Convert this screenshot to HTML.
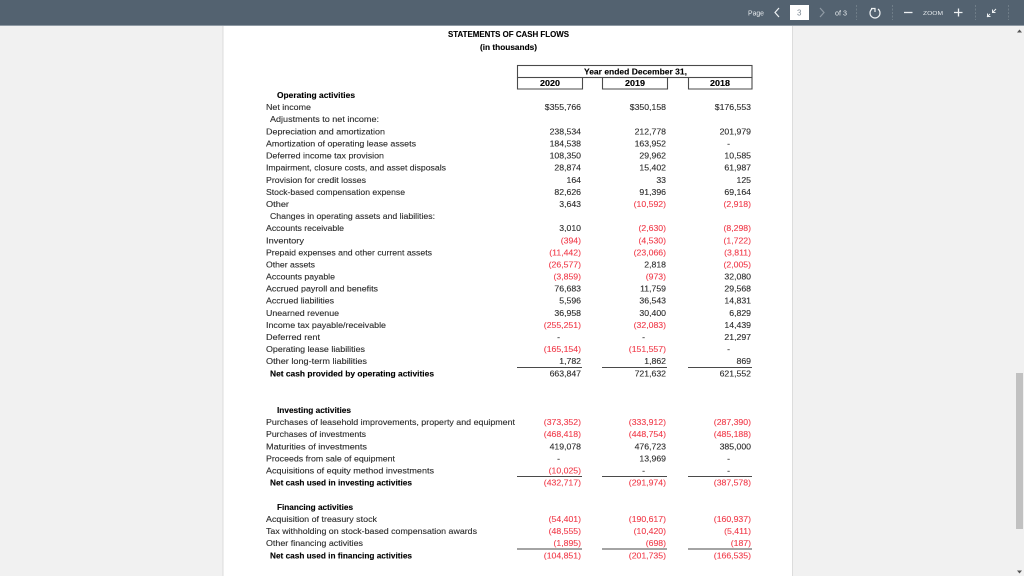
<!DOCTYPE html>
<html>
<head>
<meta charset="utf-8">
<style>
html,body{margin:0;padding:0;width:1024px;height:576px;overflow:hidden;background:#f1f1f1}
svg{position:absolute;left:0;top:0;display:block}
.doc text{font-family:"Liberation Sans",sans-serif;font-size:8.7px;fill:#2c2c2c;stroke:#2c2c2c;stroke-width:.12px}
.doc .b{font-weight:bold;fill:#000;stroke:#000;font-size:8.7px}
.n text{text-anchor:end}
.n .r{fill:#f03c4b;stroke:#f03c4b}
.tb text{font-family:"Liberation Sans",sans-serif;fill:#e6eaed}
</style>
</head>
<body>
<svg width="1024" height="576" viewBox="0 0 1024 576">
<rect width="1024" height="576" fill="#f1f1f1"/>
<rect x="223" y="25" width="570" height="551" fill="#fff"/>
<rect x="222.5" y="25" width="1" height="551" fill="#dcdcdc"/>
<rect x="792" y="25" width="1" height="551" fill="#dcdcdc"/>

<g class="doc" style="filter:blur(.35px)">
<text class="b" x="448" y="37" textLength="121" lengthAdjust="spacingAndGlyphs">STATEMENTS OF CASH FLOWS</text>
<text class="b" x="480" y="50" textLength="57" lengthAdjust="spacingAndGlyphs">(in thousands)</text>

<text class="b" x="584" y="74.500" textLength="103" lengthAdjust="spacingAndGlyphs">Year ended December 31,</text>
<text class="b" x="540" y="86" textLength="20" lengthAdjust="spacingAndGlyphs">2020</text>
<text class="b" x="625" y="86" textLength="20" lengthAdjust="spacingAndGlyphs">2019</text>
<text class="b" x="710" y="86" textLength="20" lengthAdjust="spacingAndGlyphs">2018</text>

<text class="b" x="277" y="98" textLength="78" lengthAdjust="spacingAndGlyphs">Operating activities</text>
<text x="266" y="110" textLength="45" lengthAdjust="spacingAndGlyphs">Net income</text>
<text x="270" y="122" textLength="109" lengthAdjust="spacingAndGlyphs">Adjustments to net income:</text>
<text x="266" y="134.500" textLength="119" lengthAdjust="spacingAndGlyphs">Depreciation and amortization</text>
<text x="266" y="146.500" textLength="150" lengthAdjust="spacingAndGlyphs">Amortization of operating lease assets</text>
<text x="266" y="158.500" textLength="118" lengthAdjust="spacingAndGlyphs">Deferred income tax provision</text>
<text x="266" y="170.500" textLength="180" lengthAdjust="spacingAndGlyphs">Impairment, closure costs, and asset disposals</text>
<text x="266" y="183" textLength="100" lengthAdjust="spacingAndGlyphs">Provision for credit losses</text>
<text x="266" y="195" textLength="139" lengthAdjust="spacingAndGlyphs">Stock-based compensation expense</text>
<text x="266" y="207" textLength="23" lengthAdjust="spacingAndGlyphs">Other</text>
<text x="270" y="219" textLength="165" lengthAdjust="spacingAndGlyphs">Changes in operating assets and liabilities:</text>
<text x="266" y="231" textLength="78" lengthAdjust="spacingAndGlyphs">Accounts receivable</text>
<text x="266" y="243.500" textLength="38" lengthAdjust="spacingAndGlyphs">Inventory</text>
<text x="266" y="255.500" textLength="166" lengthAdjust="spacingAndGlyphs">Prepaid expenses and other current assets</text>
<text x="266" y="267.500" textLength="49" lengthAdjust="spacingAndGlyphs">Other assets</text>
<text x="266" y="279.500" textLength="69" lengthAdjust="spacingAndGlyphs">Accounts payable</text>
<text x="266" y="291.500" textLength="112" lengthAdjust="spacingAndGlyphs">Accrued payroll and benefits</text>
<text x="266" y="303.500" textLength="68" lengthAdjust="spacingAndGlyphs">Accrued liabilities</text>
<text x="266" y="316" textLength="73" lengthAdjust="spacingAndGlyphs">Unearned revenue</text>
<text x="266" y="328" textLength="120" lengthAdjust="spacingAndGlyphs">Income tax payable/receivable</text>
<text x="266" y="340" textLength="54" lengthAdjust="spacingAndGlyphs">Deferred rent</text>
<text x="266" y="352" textLength="99" lengthAdjust="spacingAndGlyphs">Operating lease liabilities</text>
<text x="266" y="364" textLength="101" lengthAdjust="spacingAndGlyphs">Other long-term liabilities</text>
<text class="b" x="270" y="376.500" textLength="164" lengthAdjust="spacingAndGlyphs">Net cash provided by operating activities</text>

<text class="b" x="277" y="413" textLength="74" lengthAdjust="spacingAndGlyphs">Investing activities</text>
<text x="266" y="425" textLength="249" lengthAdjust="spacingAndGlyphs">Purchases of leasehold improvements, property and equipment</text>
<text x="266" y="437" textLength="100" lengthAdjust="spacingAndGlyphs">Purchases of investments</text>
<text x="266" y="449.500" textLength="101" lengthAdjust="spacingAndGlyphs">Maturities of investments</text>
<text x="266" y="461.500" textLength="129" lengthAdjust="spacingAndGlyphs">Proceeds from sale of equipment</text>
<text x="266" y="473.500" textLength="168" lengthAdjust="spacingAndGlyphs">Acquisitions of equity method investments</text>
<text class="b" x="270" y="485.500" textLength="142" lengthAdjust="spacingAndGlyphs">Net cash used in investing activities</text>

<text class="b" x="277" y="510" textLength="76" lengthAdjust="spacingAndGlyphs">Financing activities</text>
<text x="266" y="522" textLength="111" lengthAdjust="spacingAndGlyphs">Acquisition of treasury stock</text>
<text x="266" y="534" textLength="211" lengthAdjust="spacingAndGlyphs">Tax withholding on stock-based compensation awards</text>
<text x="266" y="546" textLength="97" lengthAdjust="spacingAndGlyphs">Other financing activities</text>
<text class="b" x="270" y="558.500" textLength="142" lengthAdjust="spacingAndGlyphs">Net cash used in financing activities</text>

<g class="n">
<text x="581" y="110">$355,766</text><text x="666" y="110">$350,158</text><text x="751" y="110">$176,553</text>
<text x="581" y="134.500">238,534</text><text x="666" y="134.500">212,778</text><text x="751" y="134.500">201,979</text>
<text x="581" y="146.500">184,538</text><text x="666" y="146.500">163,952</text><text x="730" y="146.500">-</text>
<text x="581" y="158.500">108,350</text><text x="666" y="158.500">29,962</text><text x="751" y="158.500">10,585</text>
<text x="581" y="170.500">28,874</text><text x="666" y="170.500">15,402</text><text x="751" y="170.500">61,987</text>
<text x="581" y="183">164</text><text x="666" y="183">33</text><text x="751" y="183">125</text>
<text x="581" y="195">82,626</text><text x="666" y="195">91,396</text><text x="751" y="195">69,164</text>
<text x="581" y="207">3,643</text><text class="r" x="666" y="207">(10,592)</text><text class="r" x="751" y="207">(2,918)</text>
<text x="581" y="231">3,010</text><text class="r" x="666" y="231">(2,630)</text><text class="r" x="751" y="231">(8,298)</text>
<text class="r" x="581" y="243.500">(394)</text><text class="r" x="666" y="243.500">(4,530)</text><text class="r" x="751" y="243.500">(1,722)</text>
<text class="r" x="581" y="255.500">(11,442)</text><text class="r" x="666" y="255.500">(23,066)</text><text class="r" x="751" y="255.500">(3,811)</text>
<text class="r" x="581" y="267.500">(26,577)</text><text x="666" y="267.500">2,818</text><text class="r" x="751" y="267.500">(2,005)</text>
<text class="r" x="581" y="279.500">(3,859)</text><text class="r" x="666" y="279.500">(973)</text><text x="751" y="279.500">32,080</text>
<text x="581" y="291.500">76,683</text><text x="666" y="291.500">11,759</text><text x="751" y="291.500">29,568</text>
<text x="581" y="303.500">5,596</text><text x="666" y="303.500">36,543</text><text x="751" y="303.500">14,831</text>
<text x="581" y="316">36,958</text><text x="666" y="316">30,400</text><text x="751" y="316">6,829</text>
<text class="r" x="581" y="328">(255,251)</text><text class="r" x="666" y="328">(32,083)</text><text x="751" y="328">14,439</text>
<text x="560" y="340">-</text><text x="645" y="340">-</text><text x="751" y="340">21,297</text>
<text class="r" x="581" y="352">(165,154)</text><text class="r" x="666" y="352">(151,557)</text><text x="730" y="352">-</text>
<text x="581" y="364">1,782</text><text x="666" y="364">1,862</text><text x="751" y="364">869</text>
<text x="581" y="376.500">663,847</text><text x="666" y="376.500">721,632</text><text x="751" y="376.500">621,552</text>

<text class="r" x="581" y="425">(373,352)</text><text class="r" x="666" y="425">(333,912)</text><text class="r" x="751" y="425">(287,390)</text>
<text class="r" x="581" y="437">(468,418)</text><text class="r" x="666" y="437">(448,754)</text><text class="r" x="751" y="437">(485,188)</text>
<text x="581" y="449.500">419,078</text><text x="666" y="449.500">476,723</text><text x="751" y="449.500">385,000</text>
<text x="560" y="461.500">-</text><text x="666" y="461.500">13,969</text><text x="730" y="461.500">-</text>
<text class="r" x="581" y="473.500">(10,025)</text><text x="645" y="473.500">-</text><text x="730" y="473.500">-</text>
<text class="r" x="581" y="485.500">(432,717)</text><text class="r" x="666" y="485.500">(291,974)</text><text class="r" x="751" y="485.500">(387,578)</text>

<text class="r" x="581" y="522">(54,401)</text><text class="r" x="666" y="522">(190,617)</text><text class="r" x="751" y="522">(160,937)</text>
<text class="r" x="581" y="534">(48,555)</text><text class="r" x="666" y="534">(10,420)</text><text class="r" x="751" y="534">(5,411)</text>
<text class="r" x="581" y="546">(1,895)</text><text class="r" x="666" y="546">(698)</text><text class="r" x="751" y="546">(187)</text>
<text class="r" x="581" y="558.500">(104,851)</text><text class="r" x="666" y="558.500">(201,735)</text><text class="r" x="751" y="558.500">(166,535)</text>
</g>
</g>

<!-- header box -->
<g fill="none" stroke="#4a4a4a" stroke-width="1.100">
<rect x="517.500" y="65.500" width="234.500" height="12"/>
<path d="M517.500 77.500V89H582.500V77.500M602.500 77.500V89H667.500V77.500M688.500 77.500V89H752V77.500"/>
</g>
<g stroke="#4a4a4a" stroke-width="1.100">
<path d="M517 367.500H582M602 367.500H667M688 367.500H752M517 476.500H582M602 476.500H667M688 476.500H752M517 549H582M602 549H667M688 549H752"/>
</g>

<!-- toolbar -->
<rect width="1024" height="25" fill="#536270"/>
<rect y="25" width="1024" height="1" fill="#8e99a3"/>
<g class="tb" style="filter:blur(.25px)">
<text x="748" y="15.500" font-size="7.500" textLength="16" lengthAdjust="spacingAndGlyphs">Page</text>
<path d="M779 8L775 12.500L779 17" fill="none" stroke="#eef1f3" stroke-width="1.200"/>
<rect x="790" y="5" width="19" height="15" fill="#fff"/>
<text x="797" y="15.500" font-size="8" style="fill:#7a8691">3</text>
<path d="M820 8L824 12.500L820 17" fill="none" stroke="#8f9aa4" stroke-width="1.200"/>
<text x="835" y="15.500" font-size="7.500" textLength="12" lengthAdjust="spacingAndGlyphs">of 3</text>
<path d="M856.500 5V20M892.500 5V20M975.500 5V20M1008.500 5V20" stroke="#6f7d88" stroke-width="1" stroke-dasharray="2 1.500"/>
<path d="M872 9A5 5 0 1 0 878 9M871 8.500H875V12" fill="none" stroke="#eef1f3" stroke-width="1.200"/>
<path d="M904 12.500H912.500" stroke="#eef1f3" stroke-width="1.300"/>
<text x="923" y="15" font-size="5.500" textLength="20" lengthAdjust="spacingAndGlyphs">ZOOM</text>
<path d="M954 12.500H962.500M958.500 8.500V16.500" stroke="#eef1f3" stroke-width="1.300"/>
<path d="M987 17L990 14M987.500 13.500V16.500H990.500M996 9L993 12M995.500 12.500H992.500V9.500" fill="none" stroke="#eef1f3" stroke-width="1"/>
</g>

<!-- scrollbar -->
<rect x="1016" y="373" width="7" height="156" fill="#c1c1c1"/>
<path d="M1017 32.500L1019.500 29.500L1022 32.500Z" fill="#555"/>
<path d="M1017 570.500L1019.500 573.500L1022 570.500Z" fill="#555"/>
</svg>
</body>
</html>
